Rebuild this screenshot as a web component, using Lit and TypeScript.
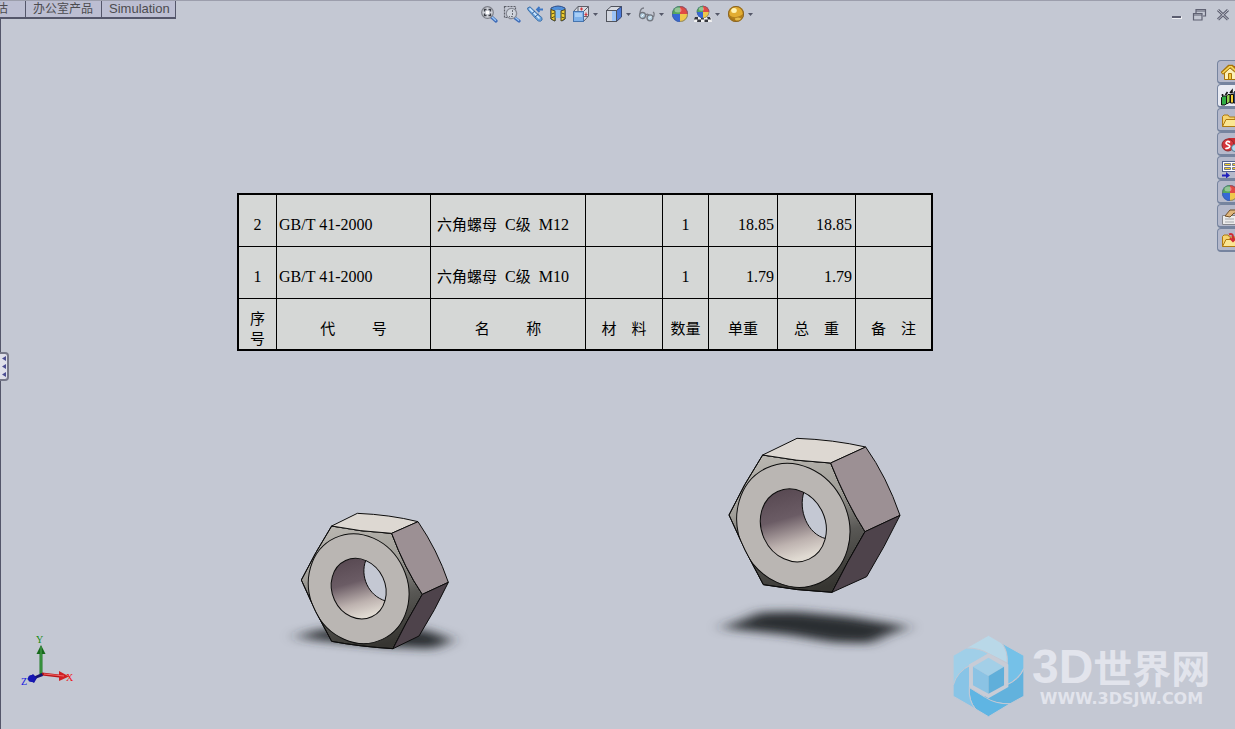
import { LitElement, html, svg, css } from "lit";
import { customElement } from "lit/decorators.js";

const sphere = svg`
  <circle cx="9" cy="9" r="8" fill="#3c73d8"/>
  <path d="M9 9V1A8 8 0 0 0 1 9Z" fill="#56a85c"/>
  <path d="M9 9V1A8 8 0 0 1 17 9Z" fill="#e04a44"/>
  <path d="M9 9H17A8 8 0 0 1 9 17Z" fill="#efc84a"/>
  <path d="M1 9A8 8 0 0 0 9 17V9Z" fill="#3568d6"/>
  <circle cx="9" cy="9" r="7.5" fill="none" stroke="#555c70" stroke-opacity=".5"/>
  <ellipse cx="7" cy="5" rx="3.5" ry="2.5" fill="#fff" opacity=".35"/>`;

const tools = [
  { name: "整屏显示全图", menu: false, art: svg`
    <path d="M11.500 12L16 16" stroke="#3f6cb8" stroke-width="3.200" stroke-linecap="round"/>
    <path d="M11.500 11.500L15.500 15.300" stroke="#9cc8f4" stroke-width="1.400" stroke-linecap="round"/>
    <circle cx="7.500" cy="7.500" r="5.800" fill="#d0d3da" stroke="#7c7f88" stroke-width="1.200"/>
    <path d="M4.500 6.500v-2h2M8.500 4.500h2v2M10.500 8.500v2h-2M6.500 10.500h-2v-2" fill="none" stroke="#3c3f47" stroke-width="1.400"/>
    <rect x="6" y="6" width="3" height="3" fill="#fff"/>` },
  { name: "局部放大", menu: false, art: svg`
    <rect x="1.500" y="1.500" width="11" height="11" fill="none" stroke="#5c5f68" stroke-width="1.200" stroke-dasharray="2 1"/>
    <path d="M12 13L16 16" stroke="#3f6cb8" stroke-width="3.200" stroke-linecap="round"/>
    <path d="M12.300 12.500L15.600 15.300" stroke="#9cc8f4" stroke-width="1.300" stroke-linecap="round"/>
    <circle cx="8.500" cy="8.500" r="5.200" fill="#d4d8df" fill-opacity=".85" stroke="#888b95" stroke-width="1.200"/>
    <path d="M9.500 5v6.500H6" fill="none" stroke="#6b6e76" stroke-dasharray="2 1"/>` },
  { name: "上一视图", menu: false, art: svg`
    <path d="M1.500 3L4 1.800 11 8.500 15.800 12.500Q17 15.500 14.500 16.200 12 16.500 10.500 14.500L2 5Z" fill="#6aa4de" stroke="#4373aa"/>
    <path d="M3.500 3.500L13.500 13.500" stroke="#d6ecff" stroke-width="1.600"/>
    <path d="M6 8.500l3-2.500M9 12l3.500-3" stroke="#305c96" stroke-width="1"/>
    <path d="M17 4.500h-5M13.500 2L11 4.500 13.500 7" fill="none" stroke="#3c76c4" stroke-width="1.800"/>` },
  { name: "剖面视图", menu: false, art: svg`
    <path d="M2 3Q9-1 16 3V14L13 16V6Q9 3 6 6V16L2 14Z" fill="#4f8fda" stroke="#2d4c86"/>
    <path d="M6 5.500Q9 3.500 12 5.500V13H6Z" fill="#8cc2f2"/>
    <path d="M2 4.500l4 1.500v10l-4-2zM16 4.500L12 6v10l4-2z" fill="#f0cf32" stroke="#50491c"/>
    <path d="M2.500 9l3-1M2.500 13l3-1.500M12.500 8l3 1M12.500 12l3 1" stroke="#594f15"/>` },
  { name: "视图定向", menu: true, art: svg`
    <path d="M1.500 6.500L6 1.500H16.500V11L11.500 16.500H1.500Z" fill="#d8dbe2" stroke="#5d606a"/>
    <path d="M6 1.500V6M11.500 6.500L16.500 1.500M12 11.500h4" fill="none" stroke="#5d606a"/>
    <rect x="1.500" y="6.500" width="10" height="10" fill="#7fb2ea" stroke="#4674ae"/>
    <path d="M3 8h7v4H3z" fill="#a8cef6"/>
    <path d="M9.500 2.500v3M8 4h3M14 7.500v4M12.500 9.500h3" stroke="#d13a40" stroke-width="1.200"/>` },
  { name: "显示样式", menu: true, art: svg`
    <path d="M1.500 5.500L6 1.500H16.500L11.500 5.500Z" fill="#d7dae1" stroke="#50535c"/>
    <path d="M11.500 5.500L16.500 1.500V12L11.500 16.500Z" fill="#4979d8" stroke="#3b4a72"/>
    <rect x="1.500" y="5.500" width="10" height="11" fill="#d3d7e0" stroke="#50535c"/>
    <rect x="7" y="6" width="4" height="10" fill="#9cc4f6"/>` },
  { name: "隐藏/显示项目", menu: true, art: svg`
    <path d="M2 9Q2 3 6 3M8 10Q10 8 11 11M15.500 12Q17 8 15 7" fill="none" stroke="#777a84" stroke-width="1.300"/>
    <circle cx="4.500" cy="10.500" r="3" fill="#b5d1e3" stroke="#72767f" stroke-width="1.300"/>
    <circle cx="12" cy="12.800" r="3" fill="#b5d1e3" stroke="#72767f" stroke-width="1.300"/>
    <path d="M3.500 11.500l2-2M11 13.500l2-2" stroke="#fff"/>` },
  { name: "编辑外观", menu: false, art: sphere },
  { name: "应用布景", menu: true, art: svg`
    <path d="M1 12H17L18 17H0Z" fill="#f2f2f2"/>
    <path d="M1 12h3v2.500H0zM7 12h3v2.500H7zM13 12h3l1 2.500h-3zM3.500 14.500H7V17H3zM10.500 14.500H14V17h-3.500z" fill="#34363c"/>
    <g transform="translate(2 0) scale(.78)">${sphere}</g>` },
  { name: "视图设定", menu: true, art: svg`
    <circle cx="9" cy="9" r="8" fill="#c88f1c"/>
    <circle cx="9" cy="8.500" r="6.500" fill="#e2ad32"/>
    <path d="M2 10Q9 15 16 9Q14 16 9 16T2 10Z" fill="#93620f" opacity=".6"/>
    <ellipse cx="7" cy="5.500" rx="2.800" ry="2.500" fill="#fff3b4"/>
    <ellipse cx="11" cy="14" rx="3" ry="1.500" fill="#f2cb58" opacity=".8"/>
    <circle cx="9" cy="9" r="7.600" fill="none" stroke="#87652a"/>` },
];

const folder = svg`
  <path d="M1.500 14.500V4.500L3 3H7L8.500 5H14V8" fill="#f6d470" stroke="#b07a10"/>
  <path d="M1.500 14.500L5 7.500H18L14.500 14.500Z" fill="#fbe694" stroke="#b07a10"/>`;

const panes = [
  { name: "SolidWorks 资源", on: false, art: svg`
    <path d="M12 2h3v5h-3z" fill="#c23b3b"/>
    <path d="M3.500 9V15.500H15V9L9 4Z" fill="#fbf0b8" stroke="#a87408"/>
    <path d="M.8 9.500L8 2.500H11L18 9.500" fill="none" stroke="#a87408" stroke-width="3.500"/>
    <path d="M1.500 9L8.500 2.800H10.500L17 9" fill="none" stroke="#f8d75c" stroke-width="1.600"/>
    <path d="M7.500 9.500h3v6h-3z" fill="#f4ca3c" stroke="#a87408"/>` },
  { name: "设计库", on: true, art: svg`
    <path d="M.5 9.500L2 8H5.500V15.500L4 17H.5Z" fill="#2fae45" stroke="#111"/>
    <path d="M5.500 8L7 6.500H9V14L5.500 16Z" fill="#8fd04f" stroke="#111"/>
    <path d="M9.500 6.500H12.500V15H9.500Z" fill="#f4cf35" stroke="#111"/>
    <path d="M13 4l4-2v13h-4z" fill="#3f79d2" stroke="#111"/>
    <path d="M1.500 6v2M4.500 7l2-3M9 5l2-2.500v3" fill="none" stroke="#111" stroke-width="1.600"/>` },
  { name: "文件探索器", on: false, art: folder },
  { name: "搜索", on: false, art: svg`
    <path d="M3 5L8 2H16V12H8Z" fill="#c92c32"/>
    <circle cx="7" cy="9" r="6" fill="#d5353a" stroke="#8c2a2d"/>
    <path d="M9 6.500Q7 4.500 5.500 6T7 8.700 8 11.500 4.500 12" fill="none" stroke="#fff" stroke-width="1.700"/>
    <circle cx="14" cy="12" r="3.500" fill="#b3dcf0" stroke="#52788e"/>` },
  { name: "视图调色板", on: false, art: svg`
    <rect x="1.500" y="1.500" width="16" height="10" fill="#fff" stroke="#53628c"/>
    <path d="M3.500 3.500h6v2h-6zM11.500 3.500h5v2h-5zM3.500 7.500h6v2h-6zM11.500 7.500h5v2h-5z" fill="#f1cd24" stroke="#515a86" stroke-width=".8"/>
    <path d="M1 14.500h4v-2.500l4 3.500-4 3V16.500H1z" fill="#2020bd"/>` },
  { name: "外观/布景", on: false, art: sphere },
  { name: "自定义属性", on: false, art: svg`
    <path d="M1.500 7.500H17V16.500H1.500Z" fill="#ececec" stroke="#85868c"/>
    <path d="M4 11h9M4 14h9" stroke="#a4a6ad"/>
    <path d="M4 8L9 2H17V6L13 5 9 9Z" fill="#e0b67c" stroke="#6f4e27"/>` },
  { name: "文档恢复", on: false, art: svg`${folder}
    <path d="M8 2.500Q12 1 12 5V7M9 6L12 9 15 6" fill="none" stroke="#cf2c34" stroke-width="2"/>` },
];

const rows = [
  ["2", "GB/T 41-2000", "M12", "", "1", "18.85", "18.85", ""],
  ["1", "GB/T 41-2000", "M10", "", "1", "1.79", "1.79", ""],
];
const heads = ["序号", "代　　  号", "名　　  称", "材　料", "数量", "单重", "总　重", "备　注"];

@customElement("app-root")
export class AppRoot extends LitElement {
  static styles = css`
    :host {
      display: flex;
      flex-direction: column;
      min-height: 100vh;
      box-sizing: border-box;
      overflow: hidden;
      position: relative;
      background: #c4c8d3;
      color: #000;
      font-family: "Liberation Sans", "Noto Sans CJK SC", sans-serif;
    }
    * { box-sizing: border-box; }
    button { font: inherit; color: inherit; border: 0; padding: 0; margin: 0; background: none; }
    svg { display: block; }

    .top {
      display: grid;
      grid-template-columns: 1fr auto 1fr;
      align-items: start;
      border-top: 1px solid #9c9eac;
      height: 19px;
      position: relative;
      z-index: 1;
    }
    .tabs { display: flex; }
    .tab {
      height: 18px;
      padding: 0 8px 0 7px;
      display: flex;
      align-items: center;
      background: #bcbed2;
      border-right: 1px solid #54566a;
      border-bottom: 2px solid #54566a;
      color: #4c4c50;
      font-size: 12px;
      line-height: 16px;
      white-space: nowrap;
    }
    .tab.latin { font-size: 13px; padding-right: 5px; }
    .tab.cut { width: 26px; padding-right: 17px; justify-content: flex-end; overflow: hidden; }
    .tools { display: flex; padding-top: 4px; }
    .tool { display: flex; align-items: center; height: 18px; padding-left: 2px; }
    .tool .pic { width: 18px; height: 18px; margin-right: 3px; }
    .tool .arrow { width: 10px; height: 6px; }
    .win { display: flex; justify-content: flex-end; gap: 8px; padding: 6px 4px 0 0; }
    .win svg { width: 16px; height: 16px; }

    .stage { position: relative; flex: 1; border-left: 1px solid #54566a; }
    .bom, .nut, .triad, .mark, .handle, .side { position: absolute; }

    .handle {
      left: -1px;
      top: 333px;
      width: 9px;
      height: 29px;
      background: #dfe0ea;
      border: 2px solid #767889;
      border-left: 0;
      border-radius: 0 4px 4px 0;
    }
    .side {
      right: 0;
      top: 41px;
      width: 18px;
      overflow: hidden;
    }
    .pane {
      display: block;
      width: 30px;
      height: 24px;
      padding: 2px 0 0 3px;
      background: #b5b9cb;
      border: 1px solid #76849f;
      border-bottom-width: 2px;
      border-radius: 4px 0 0 4px;
    }
    .pane.on { background: #e9ebf3; }
    .pane svg { width: 18px; height: 18px; }

    .bom {
      left: 236px;
      top: 174px;
      table-layout: fixed;
      width: 696px;
      border: 2px solid #000;
      border-spacing: 0;
      background: #d5d7d6;
      font-family: "Liberation Serif", "Noto Sans CJK SC", serif;
      font-size: 16px;
      line-height: 20px;
    }
    .bom td, .bom th {
      height: 52px;
      padding: 8px 3px 0;
      border-right: 1px solid #000;
      border-bottom: 1px solid #000;
      font-weight: 400;
      text-align: center;
      white-space: pre;
    }
    .bom th {
      height: 50px;
      border-bottom: 0;
      padding: 8px 2px 0;
      font-family: "Noto Sans CJK SC", sans-serif;
      font-size: 15px;
    }
    .bom th.stack { white-space: normal; padding: 8px 10px 0; }
    .bom td:last-child, .bom th:last-child { border-right: 0; }
    .bom td.left { text-align: left; padding-left: 2px; }
    .bom td.right { text-align: right; }
    .zh { font-family: "Noto Sans CJK SC", sans-serif; font-size: 15px; }

    .nut { overflow: visible; }
    .one { left: 279px; top: 481px; width: 200px; }
    .two { left: 709px; top: 406px; width: 210px; }
    .edge { stroke: #0c0c0c; stroke-width: 3; stroke-linejoin: round; }
    .triad { left: 9px; bottom: 34px; width: 80px; }
    .axis { font: 10px "Liberation Serif", serif; }

    .mark { right: 24px; bottom: 12px; display: flex; gap: 7px; color: #e2e4ec; }
    .logo { width: 73px; height: 82px; }
    .words { display: flex; flex-direction: column; padding-top: 8px; width: 179px; }
    .brand { display: flex; align-items: center; font-weight: 700; height: 46px; white-space: nowrap; font-size: 48px; }
    .brand .han { font-family: "Noto Sans CJK SC", sans-serif; font-size: 39px; line-height: 46px; }
    .site { font: 700 16px/20px "DejaVu Sans", sans-serif; text-align: center; }
  `;

  private nut(id: string, box: string, g: any) {
    const rot = `rotate(-25 ${g.cx} ${g.cy})`;
    return html`<svg class="nut ${id}" viewBox=${box} role="img" aria-label="六角螺母">
      <defs>
        <linearGradient id="${id}c" x1=".3" y1="0" x2=".55" y2="1">
          <stop offset="0" stop-color="#b9b6b0"/><stop offset=".35" stop-color="#a19f99"/>
          <stop offset=".65" stop-color="#595855"/><stop offset="1" stop-color="#363531"/>
        </linearGradient>
        <linearGradient id="${id}h" x1=".35" y1="0" x2=".6" y2="1">
          <stop offset="0" stop-color="#55464f"/><stop offset=".4" stop-color="#6b5c65"/>
          <stop offset=".7" stop-color="#bdb2af"/><stop offset=".9" stop-color="#e0dad2"/>
        </linearGradient>
        <clipPath id="${id}k"><ellipse cx=${g.cx} cy=${g.cy} rx=${g.ha} ry=${g.hb} transform=${rot} /></clipPath>
        <clipPath id="${id}f"><path d=${g.front}/></clipPath>
        <filter id="${id}b" x="-30%" y="-100%" width="160%" height="300%"><feGaussianBlur stdDeviation="24 15"/></filter>
      </defs>
      <path d=${g.shadow} fill="#2c2e30" filter="url(#${id}b)"/>
      <path class="edge" d=${g.front} fill="url(#${id}c)"/>
      <g clip-path="url(#${id}f)">
        <ellipse class="edge" cx=${g.cx} cy=${g.cy} rx=${g.fa} ry=${g.fb} transform=${rot} fill="#bab6b3"/>
      </g>
      <path class="edge" d=${g.front} fill="none"/>
      <path class="edge" d=${g.top} fill="#ddd8d2"/>
      <path class="edge" d=${g.right} fill="#9c9094"/>
      <path class="edge" d=${g.low} fill="#4e434b"/>
      <g clip-path="url(#${id}k)">
        <ellipse cx=${g.cx} cy=${g.cy} rx=${g.ha + 12} ry=${g.hb + 12} fill="url(#${id}h)"/>
        <path class="edge" d=${g.open} fill="#c4c8d3"/>
      </g>
      <ellipse class="edge" cx=${g.cx} cy=${g.cy} rx=${g.ha} ry=${g.hb} transform=${rot} fill="none"/>
    </svg>`;
  }

  render() {
    return html`
      <header class="top">
        <nav class="tabs">
          <button class="tab cut">评估</button>
          <button class="tab">办公室产品</button>
          <button class="tab latin">Simulation</button>
        </nav>
        <div class="tools">
          ${tools.map((t) => html`<button class="tool" aria-label=${t.name}>
            <svg class="pic" viewBox="0 0 18 18">${t.art}</svg>
            ${t.menu ? html`<svg class="arrow" viewBox="0 0 10 6"><path d="M0 2H5L2.500 5Z" fill="#555869"/></svg>` : ""}
          </button>`)}
        </div>
        <div class="win">
          <button aria-label="最小化"><svg viewBox="0 0 16 16"><path d="M5 9.500h10v2.500H5z" fill="#f0f1f5"/><path d="M5 9h9v2H5z" fill="#5c5e70"/></svg></button>
          <button aria-label="还原"><svg viewBox="0 0 16 16"><path d="M5 6V2.500h9.500V9H12M5 4h9M2.500 6.500H11V13H2.500zM3 8h8" fill="none" stroke="#5f6172" stroke-width="1.200"/></svg></button>
          <button aria-label="关闭"><svg viewBox="0 0 16 16"><path d="M3 3L13 12.500M13 3L3 12.500" stroke="#5f6172" stroke-width="3"/><path d="M3 3L13 12.500M13 3L3 12.500" stroke="#c0c2cd" stroke-width="1"/></svg></button>
        </div>
      </header>
      <main class="stage">
        <button class="handle" aria-label="展开面板"><svg width="7" height="25" viewBox="0 0 7 25"><path d="M6 2v5L2 4.500zM6 10v5L2 12.500zM6 18v5L2 20.500z" fill="#4b4d92"/></svg></button>

        <table class="bom">
          <colgroup>
            <col width="38"><col width="154"><col width="155"><col width="77">
            <col width="46"><col width="69"><col width="78"><col width="75">
          </colgroup>
          <tbody>
            ${rows.map((r) => html`<tr>${r.map((c, i) =>
              i === 2
                ? html`<td class="left"> <span class="zh">六角螺母</span>  C<span class="zh">级</span>  ${c}</td>`
                : html`<td class=${i === 1 ? "left" : i === 5 || i === 6 ? "right" : ""}>${c}</td>`)}</tr>`)}
            <tr>${heads.map((h, i) => html`<th scope="col" class=${i === 0 ? "stack" : ""}>${h}</th>`)}</tr>
          </tbody>
        </table>

        ${this.nut("one", "0 0 600 495", {
          cx: 236, cy: 266, fa: 147, fb: 168, ha: 80, hb: 93,
          front: "M155 78Q240 95 335 100Q374 205 427 283Q378 366 339 446Q240 440 155 424Q104 336 64 240Q106 156 155 78Z",
          top: "M155 78L232 40Q330 44 414 65L335 100Q240 95 155 78Z",
          right: "M335 100L414 65Q472 150 505 247L427 283Q374 205 335 100Z",
          low: "M427 283L505 247Q466 330 417 408L339 446Q378 366 427 283Z",
          open: "M257 182C240 228 264 287 317 303L420 300V150Z",
          shadow: "M40 410L130 388H430L520 420L460 446L330 440L130 422Z",
        })}
        ${this.nut("two", "0 0 630 690", {
          cx: 250, cy: 301, fa: 165, fb: 190, ha: 96, hb: 112,
          front: "M158 90Q260 109 362 114Q408 230 465 320Q411 411 366 502Q260 497 160 479Q102 376 57 270Q102 176 158 90Z",
          top: "M158 90L261 40Q370 44 467 66L362 114Q260 109 158 90Z",
          right: "M362 114L467 66Q530 155 570 271L465 320Q408 230 362 114Z",
          low: "M465 320L570 271Q524 366 470 455L366 502Q411 411 465 320Z",
          open: "M282 200C264 255 292 328 348 341L450 340V170Z",
          shadow: "M30 608L100 585L150 562L260 560L420 576L600 606L540 625L480 655L370 652L240 630Z",
        })}

        <svg class="triad" viewBox="0 0 80 70" role="img" aria-label="坐标轴">
          <path d="M29.500 49V27h3v22z" fill="#1f7a24"/><path d="M31 20l4.500 9h-9z" fill="#176a1c"/><path d="M31 22v26" stroke="#4fa653"/>
          <path d="M32 47.500l17 2v3l-17-2z" fill="#b91418"/><path d="M49 46l10 5.500-10 4.500z" fill="#d02024"/><path d="M34 49l20 2" stroke="#f46b6b"/>
          <path d="M32 48l-9 4-1 3 11-4z" fill="#14146e"/><path d="M17 54l6-5 4 4-3 5z" fill="#1414a4"/><circle cx="21.500" cy="53.500" r="3.500" fill="#1616b4"/>
          <text class="axis" x="26" y="18" fill="#108a10">Y</text>
          <text class="axis" x="56" y="56" fill="#f01616">X</text>
          <text class="axis" x="11" y="60" fill="#1616e0">Z</text>
        </svg>

        <aside class="mark">
          <svg class="logo" viewBox="36 41 218 248" aria-hidden="true">
            <g stroke="#c4c8d3" stroke-width="3">
              <path d="M38 103L78 80Q120 78 145 98L92 130Q52 150 38 195Z" fill="#a0cfe8"/>
              <path d="M78 80L145 42L186 66Q204 90 202 126L145 97Q118 80 78 80Z" fill="#b9d8e8"/>
              <path d="M186 66L252 103V142Q236 176 196 194L202 126Q204 90 186 66Z" fill="#75c1e8"/>
              <path d="M252 142V226L210 249Q166 250 125 230L196 194Q240 176 252 142Z" fill="#62b2dd"/>
              <path d="M210 249L145 288L106 265Q84 240 87 200L136 230Q166 250 210 249Z" fill="#5fb5e3"/>
              <path d="M106 265L38 226V194Q50 150 92 132L87 200Q84 240 106 265Z" fill="#88c4e6"/>
            </g>
            <path d="M145 96L205 130V198L145 232L86 198V130Z" fill="#c8ccd6"/>
            <path d="M145 110L192 137L145 165L98 137Z" fill="#a3cfe7"/>
            <path d="M98 137L145 165V219L98 193Z" fill="#8bc3e4"/>
            <path d="M192 137L145 165V219L192 193Z" fill="#60afda"/>
          </svg>
          <div class="words">
            <div class="brand"><span>3D</span><span class="han">世界网</span></div>
            <div class="site">WWW.3DSJW.COM</div>
          </div>
        </aside>

        <nav class="side">
          ${panes.map((p) => html`<button class="pane ${p.on ? "on" : ""}" aria-label=${p.name}><svg viewBox="0 0 18 18">${p.art}</svg></button>`)}
        </nav>
      </main>`;
  }
}
